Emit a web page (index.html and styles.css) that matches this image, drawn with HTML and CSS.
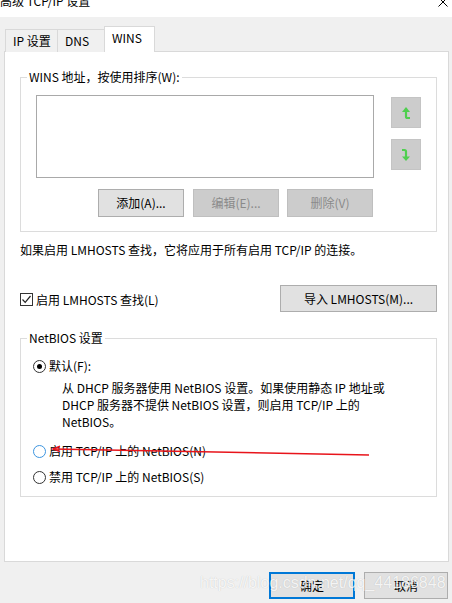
FILE: index.html
```html
<!DOCTYPE html>
<html lang="zh-CN">
<head>
    <meta charset="UTF-8">
    <meta name="viewport" content="width=device-width, initial-scale=1.0">
    <title>高级 TCP/IP 设置</title>
    <link rel="stylesheet" href="styles.css">
</head>
<body>

    <div class="titlebar">
        <span class="title">高级 TCP/IP 设置</span>
        <svg class="close" width="10" height="10" viewBox="0 0 10 10">
            <path d="M0.5 0.5 L9.5 9.5 M9.5 0.5 L0.5 9.5" stroke="#000" stroke-width="1" fill="none"/>
        </svg>
    </div>

    <div class="dialog">
        <div class="tabs">
            <div class="tab">IP 设置</div>
            <div class="tab">DNS</div>
            <div class="tab active">WINS</div>
        </div>

        <div class="panel">
            <div class="group wins">
                <div class="group-title">WINS 地址，按使用排序(W):</div>
                <div class="wins-body">
                    <div class="listbox"></div>
                    <div class="move-btns">
                        <button class="btn-icon">
                            <svg width="10" height="14" viewBox="0 0 10 14">
                                <path d="M5 1 L9 6 H1 Z" fill="#4fcf4f"/>
                                <path d="M5 5 V10.5 Q5 12 6.5 12 H9" fill="none" stroke="#4fcf4f" stroke-width="2.2"/>
                            </svg>
                        </button>
                        <button class="btn-icon">
                            <svg width="10" height="14" viewBox="0 0 10 14">
                                <path d="M1 2 H3.5 Q5 2 5 3.5 V9" fill="none" stroke="#4fcf4f" stroke-width="2.2"/>
                                <path d="M1 8.5 H9 L5 13 Z" fill="#4fcf4f"/>
                            </svg>
                        </button>
                    </div>
                    <div class="list-actions">
                        <button class="btn">添加(A)...</button>
                        <button class="btn" disabled>编辑(E)...</button>
                        <button class="btn" disabled>删除(V)</button>
                    </div>
                </div>
            </div>

            <p class="note">如果启用 LMHOSTS 查找，它将应用于所有启用 TCP/IP 的连接。</p>

            <div class="lmhosts-row">
                <label class="check">
                    <span class="checkbox">
                        <svg width="11" height="11" viewBox="0 0 11 11">
                            <path d="M1.5 5.5 L4.2 8.3 L9.5 2" fill="none" stroke="#222" stroke-width="1.2"/>
                        </svg>
                    </span>
                    启用 LMHOSTS 查找(L)
                </label>
                <button class="btn btn-import">导入 LMHOSTS(M)...</button>
            </div>

            <div class="group netbios">
                <div class="group-title">NetBIOS 设置</div>
                <div class="netbios-body">
                    <div class="radio-row"><span class="radio checked"></span>默认(F):</div>
                    <p class="desc">从 DHCP 服务器使用 NetBIOS 设置。如果使用静态 IP 地址或<br>DHCP 服务器不提供 NetBIOS 设置，则启用 TCP/IP 上的<br>NetBIOS。</p>
                    <div class="radio-row row-enable"><span class="radio hover"></span>启用 TCP/IP 上的 NetBIOS(N)</div>
                    <div class="radio-row row-disable"><span class="radio"></span>禁用 TCP/IP 上的 NetBIOS(S)</div>
                </div>
            </div>
        </div>

        <div class="footer">
            <button class="btn btn-ok">确定</button>
            <button class="btn btn-cancel">取消</button>
        </div>
    </div>

    <!-- red mark drawn over the screenshot -->
    <svg class="annotation" width="325" height="14" viewBox="0 0 325 14">
        <path d="M5 5 L321 11" stroke="#e8141b" stroke-width="1.5" fill="none"/>
        <path d="M12 2.2 L5 5 L12 7.6" stroke="#e8141b" stroke-width="1.5" fill="none"/>
    </svg>

    <div class="watermark">https://blog.csdn.net/qq_44186848</div>

</body>
</html>
```

FILE: styles.css
```css
body {
    margin: 0;
    width: 452px;
    height: 603px;
    overflow: hidden;
    background-color: #f0f0f0;
    font-family: "Noto Sans CJK SC", "Noto Sans", sans-serif;
    font-size: 12px;
    color: #000;
}
p {
    margin: 0;
}
.titlebar {
    height: 17px;
    background-color: #fff;
    overflow: hidden;
    display: flex;
    justify-content: space-between;
    align-items: flex-start;
}
.title {
    display: block;
    line-height: 16px;
    margin-top: -7px;
}
.close {
    margin-top: -3px;
    margin-right: 4px;
}
.dialog {
    padding: 9px 3px 0 4px;
}
.tabs {
    display: flex;
    align-items: flex-end;
    height: 26px;
    margin-bottom: -1px;
}
.tab {
    box-sizing: border-box;
    height: 23px;
    padding: 3px 0 0 7px;
    line-height: 16px;
    border: 1px solid #d9d9d9;
    border-bottom: none;
    border-right: none;
    background-color: #f0f0f0;
}
.tab:nth-child(1) {
    width: 52px;
    margin-left: 1px;
}
.tab:nth-child(2) {
    width: 47px;
}
.tab.active {
    width: 51px;
    height: 26px;
    padding-top: 3px;
    border-right: 1px solid #d9d9d9;
    background-color: #fff;
    position: relative;
    z-index: 1;
}
.panel {
    box-sizing: border-box;
    height: 511px;
    padding: 0 11px 0 15px;
    border: 1px solid #d9d9d9;
    background-color: #fff;
}
.group {
    border: 1px solid #dcdcdc;
}
.group-title {
    width: fit-content;
    margin: -9px 0 0 6px;
    padding: 0 2px;
    line-height: 16px;
    background-color: #fff;
}
.wins {
    margin-top: 25px;
}
.wins-body {
    display: grid;
    grid-template-columns: 338px 30px;
    column-gap: 17px;
    padding: 10px 15px 14px 15px;
}
.listbox {
    box-sizing: border-box;
    height: 83px;
    border: 1px solid #a9a9a9;
    background-color: #fff;
}
.move-btns {
    display: flex;
    flex-direction: column;
    gap: 11px;
    padding-top: 2px;
}
button {
    font: inherit;
    color: #000;
    padding: 0;
    margin: 0;
    box-sizing: border-box;
    cursor: pointer;
}
.btn-icon {
    width: 30px;
    height: 31px;
    border: 1px solid #c4c4c4;
    background-color: #cccccc;
    display: flex;
    align-items: center;
    justify-content: center;
}
.list-actions {
    display: flex;
    justify-content: flex-end;
    gap: 9px;
    margin-top: 11px;
    padding-right: 1px;
}
.list-actions .btn:last-child {
    margin-left: -1px;
}
.btn {
    width: 86px;
    height: 28px;
    border: 1px solid #adadad;
    background-color: #e1e1e1;
    line-height: 16px;
}
.btn:disabled {
    border-color: #bfbfbf;
    background-color: #cccccc;
    color: #8a8a8a;
}
.note {
    margin-top: 10px;
    line-height: 16px;
}
.lmhosts-row {
    display: flex;
    justify-content: space-between;
    align-items: center;
    margin-top: 27px;
}
.check {
    display: flex;
    align-items: center;
    gap: 3px;
    line-height: 16px;
    margin-top: 2px;
}
.checkbox {
    box-sizing: border-box;
    width: 13px;
    height: 13px;
    border: 1px solid #333;
    display: flex;
    align-items: center;
    justify-content: center;
}
.btn-import {
    width: 157px;
    height: 27px;
}
.netbios {
    margin-top: 26px;
}
.netbios-body {
    padding: 12px 12px 11px 12px;
}
.radio-row {
    display: flex;
    align-items: center;
    gap: 3px;
    line-height: 16px;
}
.radio {
    box-sizing: border-box;
    width: 13px;
    height: 13px;
    border: 1px solid #333;
    border-radius: 50%;
    display: flex;
    align-items: center;
    justify-content: center;
}
.radio.checked::after {
    content: "";
    width: 5px;
    height: 5px;
    border-radius: 50%;
    background-color: #000;
}
.radio.hover {
    border-color: #3c95e0;
}
.desc {
    margin: 5px 0 0 29px;
    line-height: 17px;
}
.row-enable {
    margin-top: 13px;
}
.row-disable {
    margin-top: 10px;
}
.footer {
    display: flex;
    justify-content: flex-end;
    gap: 9px;
    margin-top: 10px;
    padding-right: 1px;
}
.btn-ok {
    height: 27px;
    border: 2px solid #0078d7;
}
.btn-cancel {
    width: 84px;
    height: 27px;
}
.annotation {
    position: absolute;
    left: 48px;
    top: 444px;
}
.watermark {
    position: absolute;
    left: 200px;
    top: 574px;
    font-family: "Liberation Sans", Arial, sans-serif;
    font-size: 16px;
    line-height: 18px;
    color: rgba(255, 255, 255, 0.85);
    text-shadow: 0 0 1px rgba(0, 0, 0, 0.2);
    white-space: nowrap;
}
```
